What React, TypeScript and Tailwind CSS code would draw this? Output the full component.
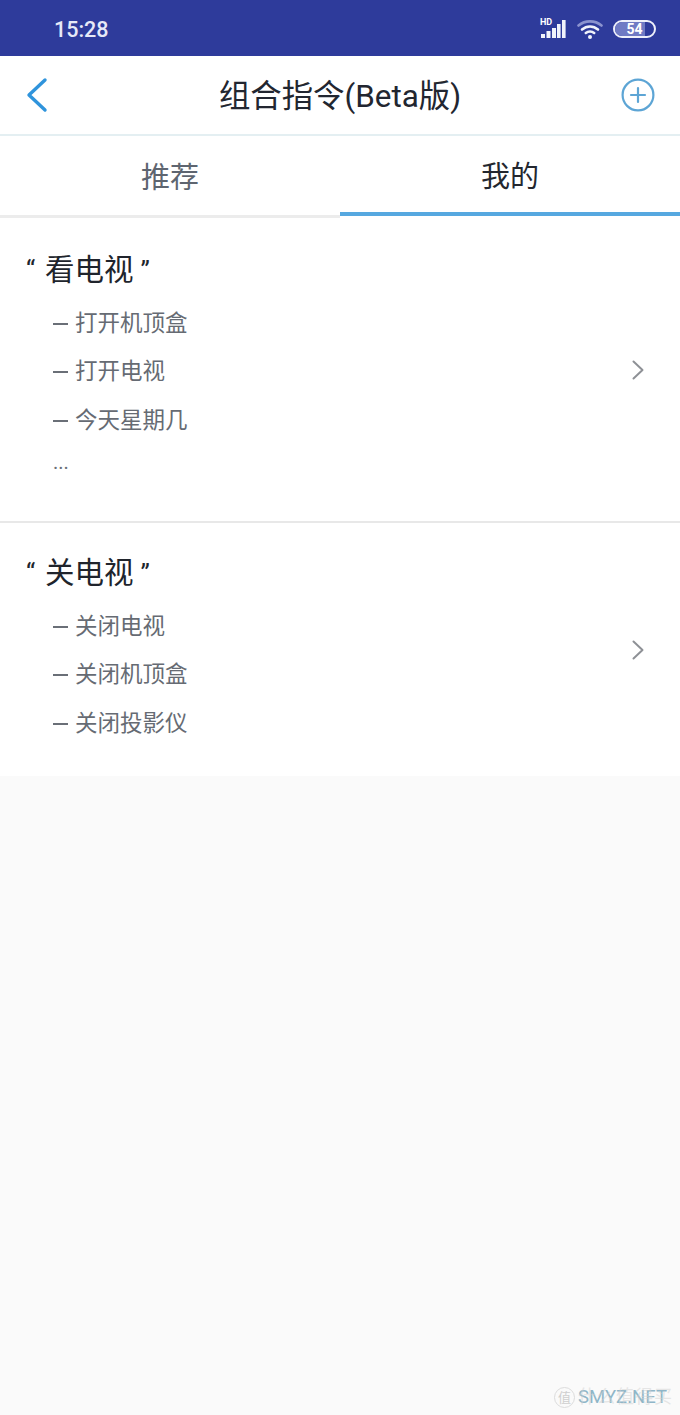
const FONT = "font-['Roboto','Noto_Sans_CJK_SC',sans-serif]";

interface Group {
  title: string;
  commands: string[];
  more?: boolean;
}

const groups: Group[] = [
  { title: '看电视', commands: ['打开机顶盒', '打开电视', '今天星期几'], more: true },
  { title: '关电视', commands: ['关闭电视', '关闭机顶盒', '关闭投影仪'] },
];

function StatusBar() {
  return (
    <div className="h-[56px] bg-[#2e3b9b] flex items-center pl-[54px] pr-[24px] justify-between">
      <span className="text-[21.5px] font-medium text-[#e6e9f7] leading-none mt-[3px]">15:28</span>
      <div className="flex items-center gap-[10px] mt-[2px]">
        <div className="relative w-[27px] h-[20px]">
          <span className="absolute left-0 top-[-1px] text-[9px] font-bold text-white leading-none">HD</span>
          <svg width="27" height="20" viewBox="0 0 27 20" fill="#f1f3fb">
            <rect x="1" y="15" width="4" height="4" />
            <rect x="6.5" y="12" width="4" height="7" />
            <rect x="12" y="9" width="4" height="10" />
            <rect x="17" y="5" width="3.6" height="14" />
            <rect x="22" y="1" width="3.6" height="18" />
          </svg>
        </div>
        <svg width="26" height="20" viewBox="0 0 26 20" fill="none" strokeLinecap="round">
          <path d="M1.5 6.5C8 1 18 1 24.5 6.5" stroke="#8b93cf" strokeWidth="2.6" />
          <path d="M5 10.5C9.8 6.4 16.2 6.4 21 10.5" stroke="#f1f3fb" strokeWidth="2.6" />
          <path d="M8.8 14C11.2 12.2 14.8 12.2 17.2 14" stroke="#f1f3fb" strokeWidth="2.6" />
          <circle cx="13" cy="18" r="2" fill="#f1f3fb" />
        </svg>
        <div className="relative w-[43px] h-[18px] rounded-full border-2 border-[#eef0fa] overflow-hidden flex items-center justify-center">
          <div className="absolute left-0 top-0 bottom-0 w-[30px] bg-[#6f7ac4]" />
          <span className="relative text-[14px] font-bold text-white leading-none">54</span>
        </div>
      </div>
    </div>
  );
}

function Header() {
  return (
    <div className="h-[80px] bg-white border-b-2 border-[#e4eff2] flex items-center justify-between pl-[25px] pr-[25px]">
      <div className="w-[34px]">
        <svg width="24" height="36" viewBox="0 0 24 36" fill="none" stroke="#2f94dc" strokeWidth="3.4" strokeLinecap="round" strokeLinejoin="round">
          <path d="M20 3L4 18L20 33" />
        </svg>
      </div>
      <h1 className="text-[31.4px] text-[#222630] leading-none font-normal mt-[3px]">组合指令(Beta版)</h1>
      <svg width="34" height="34" viewBox="0 0 34 34" fill="none" stroke="#5da5d5" strokeWidth="2.2" strokeLinecap="round">
        <circle cx="17" cy="17" r="15.4" />
        <path d="M17 10V24M10 17H24" />
      </svg>
    </div>
  );
}

function Tabs() {
  return (
    <div className="flex h-[82px] bg-white">
      <div className="flex-1 flex items-center justify-center border-b-[3px] border-[#ececec] text-[29px] text-[#5e6570] pt-[7px]">
        推荐
      </div>
      <div className="flex-1 text-[29px] text-[#23272f]">
        <div className="h-[80px] w-full flex items-center justify-center border-b-[4px] border-[#56a8e0] pt-[8px]">我的</div>
      </div>
    </div>
  );
}

function GroupCard({ group, first }: { group: Group; first?: boolean }) {
  return (
    <div className={`relative bg-white pl-[26px] pt-[28px] ${first ? 'border-b-2 border-[#e8e8e8] pb-[44px]' : 'pb-[28px]'}`}>
      <div className="text-[29.5px] leading-[44px] text-[#20242c] whitespace-pre">
        <span className="inline-block w-[19px] text-[26px] align-[1px]">“</span>
        {group.title}
        <span className="inline-block ml-[7px] text-[26px] align-[1px]">”</span>
      </div>
      <div className="pl-[27px] mt-[7.5px] text-[#666b73] text-[22.5px]">
        {group.commands.map((cmd) => (
          <div key={cmd} className="h-[48.5px] flex items-center">
            <span className="w-[15px] h-[2px] bg-[#6a6f77] mr-[7px]" />
            {cmd}
          </div>
        ))}
        {group.more && <div className="text-[20px] leading-[30px] text-[#6a6f77] mt-[2px]">...</div>}
      </div>
      <div className={`absolute right-[36px] flex items-center ${first ? 'top-0 bottom-[2px]' : 'top-[1px] bottom-0'}`}>
        <svg width="12" height="20" viewBox="0 0 12 20" fill="none" stroke="#8e9196" strokeWidth="2" strokeLinecap="round" strokeLinejoin="round">
          <path d="M1.5 1.5L10.5 10L1.5 18.5" />
        </svg>
      </div>
    </div>
  );
}

export default function App() {
  return (
    <div className={`relative w-[680px] h-[1415px] overflow-hidden bg-[#fafafa] ${FONT}`}>
      <StatusBar />
      <Header />
      <Tabs />
      <div className="h-[2px] bg-white" />
      {groups.map((g, i) => (
        <GroupCard key={g.title} group={g} first={i === 0} />
      ))}
      <div className="absolute right-[13px] bottom-[7px] flex items-center gap-[3px]">
        <span className="w-[21px] h-[21px] rounded-full border border-[#dcdcdc] text-[#cfcfcf] text-[13px] flex items-center justify-center">值</span>
        <span className="text-[18.5px] leading-none text-[#8fb6c8]">SMYZ.NET</span>
        <span className="absolute right-[-6px] top-[1px] text-[18px] leading-none tracking-[1px] text-[#d0d0d0]/50">什么值得买</span>
      </div>
    </div>
  );
}
